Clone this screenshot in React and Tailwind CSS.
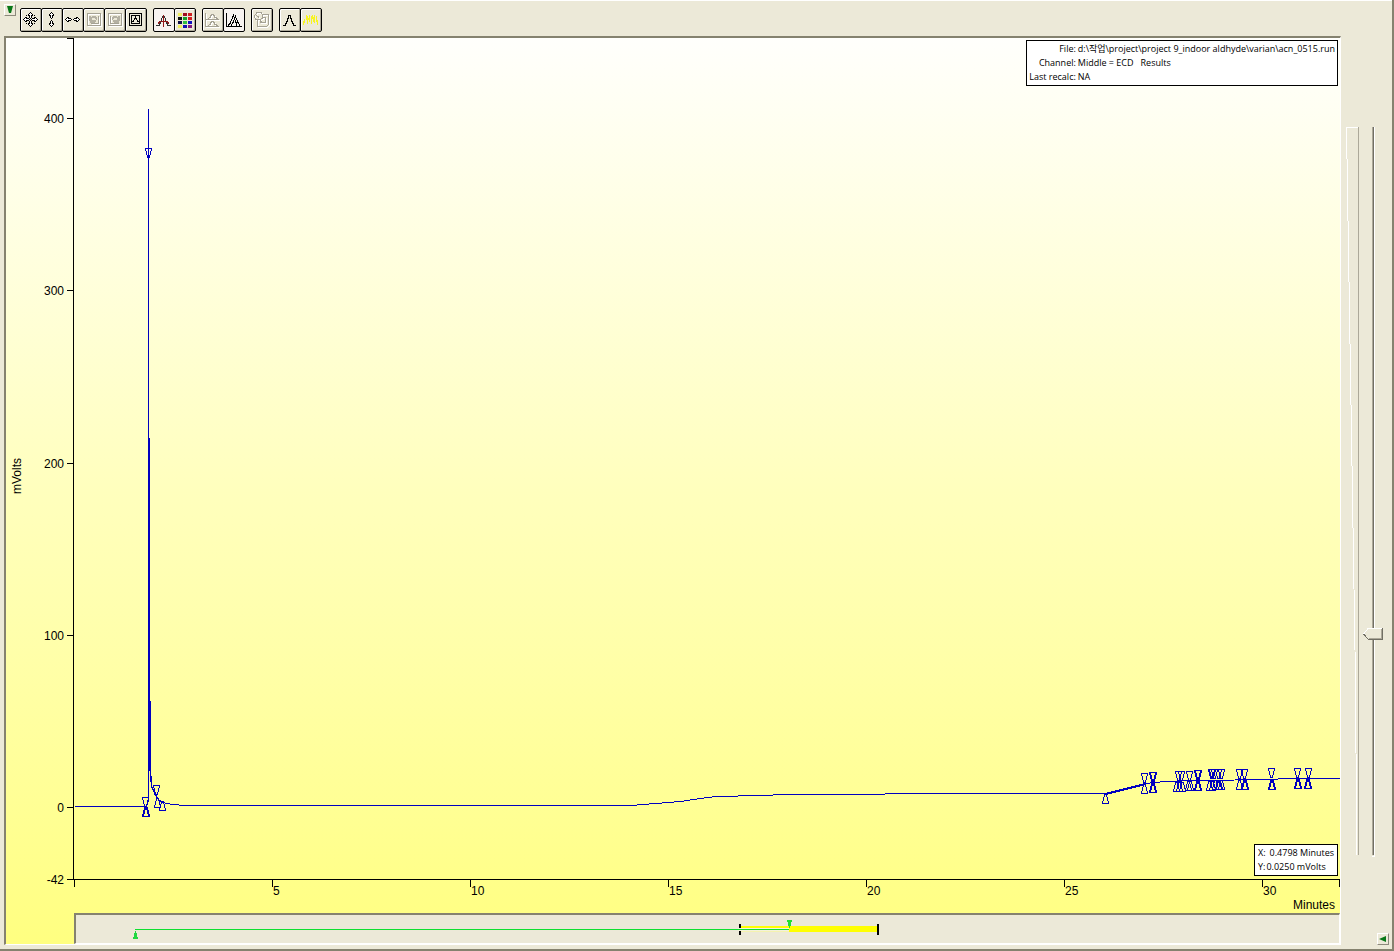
import { useState } from 'react';

const BLUE = '#0000c0';

const Y_TICKS = [
  { y: 118, label: '400' },
  { y: 290, label: '300' },
  { y: 463, label: '200' },
  { y: 635, label: '100' },
  { y: 807, label: '0' },
  { y: 879, label: '-42' },
];

const X_TICKS = [
  { x: 74, label: '' },
  { x: 272, label: '5' },
  { x: 470, label: '10' },
  { x: 668, label: '15' },
  { x: 866, label: '20' },
  { x: 1064, label: '25' },
  { x: 1262, label: '30' },
  { x: 1339, label: '' },
];

// [x, top] of every peak start / end marker
const DOWN_MARKS = [
  [148, 148], [145, 797], [156, 785],
  [1144, 773], [1152, 772], [1153, 772], [1178, 771], [1181, 771], [1189, 771],
  [1197, 770], [1198, 770], [1211, 769], [1212, 769], [1214, 769], [1218, 769], [1221, 769],
  [1239, 769], [1244, 769], [1271, 768], [1297, 768], [1308, 768],
];

const UP_MARKS = [
  [145, 807], [146, 807], [157, 798], [162, 801], [1105, 794],
  [1144, 784], [1152, 783], [1153, 783], [1176, 782], [1179, 782], [1182, 782], [1188, 781],
  [1190, 781], [1197, 781], [1198, 781], [1209, 781], [1212, 781], [1215, 780], [1218, 780],
  [1219, 780], [1221, 780], [1239, 780], [1244, 780], [1245, 780], [1271, 780], [1272, 780],
  [1297, 779], [1298, 779], [1307, 779], [1308, 779],
];

const TRACE =
  'M74 806H146L148 800V108M148 437V700L149 765L151 786L155 795L158 799L162 802L172 804L185 805H630L655 803L680 801L700 798L716 796L760 795L785 794H870L900 793H1105L1145 783L1165 781L1200 780L1270 779L1285 778H1340';

const ARROW_UP = ['..#..', '.#o#.', '#ooo#', '##o##', '.#o#.', '.#o#.', '..#..'];
const ARROW_DOWN = [...ARROW_UP].reverse();
const ARROW_LEFT = ['..##...', '.#o###.', '#ooooo#', '.#o###.', '..##...'];
const ARROW_RIGHT = ['...##..', '.###o#.', '#ooooo#', '.###o#.', '...##..'];

// One square per character: # is black, o is white
function Pixels({ rows, x, y }) {
  return rows.flatMap((row, r) =>
    [...row].map((c, i) =>
      c === '.' ? null : (
        <rect key={`${r}-${i}`} x={x + i} y={y + r} width="1" height="1" fill={c === '#' ? '#000' : '#fff'} />
      )
    )
  );
}

function ArrowsAll() {
  return (
    <>
      <Pixels rows={ARROW_UP} x={6} y={1} />
      <Pixels rows={ARROW_DOWN} x={6} y={9} />
      <Pixels rows={ARROW_LEFT} x={1} y={6} />
      <Pixels rows={ARROW_RIGHT} x={9} y={6} />
      <path d="M4 4H5V5H4ZM12 4H13V5H12ZM4 12H5V13H4ZM12 12H13V13H12Z" fill="#000" />
    </>
  );
}

function ArrowsVertical() {
  return (
    <>
      <Pixels rows={ARROW_UP} x={6} y={1} />
      <Pixels rows={ARROW_DOWN} x={6} y={9} />
    </>
  );
}

function ArrowsHorizontal() {
  return (
    <>
      <Pixels rows={ARROW_LEFT} x={1} y={6} />
      <Pixels rows={ARROW_RIGHT} x={9} y={6} />
    </>
  );
}

// Disabled icons get a white shadow down and to the right
function Embossed({ children }) {
  return (
    <>
      <g fill="none" stroke="#fff" transform="translate(1 1)">{children}</g>
      <g fill="none" stroke="#a5a294">{children}</g>
    </>
  );
}

function ZoomPrevious() {
  return (
    <>
      <Embossed>
        <path d="M2.500 2.500H15.500V14.500H2.500Z" />
        <path d="M13.500 5V12.500H5.500" />
      </Embossed>
      <path d="M4 5H6V6H7V5H11V6H12V9H11V11H10V12H5V10H4Z" fill="#b4b1a3" />
      <path d="M7 7H10V8H11V9H7Z" fill="#ece9d8" />
    </>
  );
}

function ZoomNext() {
  return (
    <>
      <Embossed>
        <path d="M2.500 2.500H15.500V14.500H2.500Z" />
        <path d="M4.500 5V12.500H12.500" />
      </Embossed>
      <path d="M14 5H12V6H11V5H7V6H6V9H7V11H8V12H13V10H14Z" fill="#b4b1a3" />
      <path d="M11 7H8V8H7V9H11Z" fill="#ece9d8" />
    </>
  );
}

function FullScale() {
  return (
    <g fill="none" stroke="#000">
      <path d="M2.500 2.500H14.500V14.500H2.500ZM4.500 4.500H12.500V12.500H4.500Z" />
      <path d="M5 10.500H6L7.500 8.500L8.500 6.500L9.500 8.500L11 10.500H12" />
    </g>
  );
}

function PeakCursor() {
  return (
    <g fill="none">
      <path d="M1 14.500H4L6 10.500L7.500 5.500H9.500L11 10.500L13 14.500H16" stroke="#303030" />
      <path d="M8.500 4V16M3 12.500L5 10.500H12L14 12.500" stroke="#901818" />
    </g>
  );
}

function ColorGrid() {
  const colors = [
    '#f0f060', '#a01020', '#d02020',
    '#101010', '#18a028', '#d02020',
    '#10104a', '#30c040', '#1010c0',
    '#f0f060', '#1010b0', '#801880',
  ];
  return colors.map((c, i) => (
    <rect key={i} x={2 + (i % 3) * 5} y={2 + Math.floor(i / 3) * 4} width="4" height="3" fill={c} />
  ));
}

function StackedPlots() {
  return (
    <Embossed>
      <path d="M1.500 2V8.500H15M4 7.500L6 6.500L7.500 3.500H9.500L11 6.500L14 7.500M1.500 9V15.500H15M4 14.500L6 13.500L7.500 10.500H9.500L11 13.500L14 14.500" />
    </Embossed>
  );
}

function OverlaidPlots() {
  return (
    <path
      d="M1.500 2V15.500H17M3 14.500L5 12.500L8.500 4.500L11 11.500L12 14.500M6 14.500L8 11.500L10.500 5.500L13 11.500L15 14.500"
      fill="none"
      stroke="#000"
    />
  );
}

function CopyPlot() {
  return (
    <Embossed>
      <path d="M1.500 4.500L4 1.500H8L9.500 3.500V7L7.500 8.500H3L1.500 6.500ZM9 3.500H15.500V13.500L13.500 15.500H4.500V9" />
      <path d="M7 11.500H12.500V6.500H10M3.500 4.500L6 6.500M7 9.500L10 12" />
    </Embossed>
  );
}

function SinglePeak() {
  return (
    <path
      d="M2 14.500H4.500V12.500H5.500V10.500H6.500V7.500H7.500V4.500H9.500V7.500H10.500V10.500H11.500V12.500H12.500V14.500H15"
      fill="none"
      stroke="#000"
    />
  );
}

function YellowTrace() {
  return (
    <path
      d="M1.500 14V10M2.500 12V8M4.500 9V4M5.500 13V5M6.500 9V7M7.500 11V4M9.500 13V5M10.500 8V4M11.500 11V6M12.500 12V4M14.500 11V5M15.500 14V9"
      fill="none"
      stroke="#f8f420"
    />
  );
}

const TOOL_GROUPS = [
  [
    { label: 'Zoom all directions', Icon: ArrowsAll },
    { label: 'Zoom vertical', Icon: ArrowsVertical },
    { label: 'Zoom horizontal', Icon: ArrowsHorizontal },
    { label: 'Previous scaling', Icon: ZoomPrevious, disabled: true },
    { label: 'Next scaling', Icon: ZoomNext, disabled: true },
    { label: 'Full scale', Icon: FullScale },
  ],
  [
    { label: 'Cursor', Icon: PeakCursor, pressed: true },
    { label: 'Colors', Icon: ColorGrid },
  ],
  [
    { label: 'Stacked plots', Icon: StackedPlots, disabled: true },
    { label: 'Overlaid plots', Icon: OverlaidPlots, pressed: true },
  ],
  [{ label: 'Copy plot', Icon: CopyPlot, disabled: true }],
  [
    { label: 'Select peak', Icon: SinglePeak },
    { label: 'Select trace', Icon: YellowTrace },
  ],
];

function ToolButton({ label, Icon, pressed, disabled }) {
  return (
    <button
      aria-label={label}
      disabled={disabled}
      className={`-mr-px flex h-6 w-[22px] items-center justify-center rounded-xs border border-black ${
        pressed
          ? 'bg-[#f7f3f0]'
          : 'bg-[#ece9d8] shadow-[inset_1px_1px_0_#fff,inset_-1px_-1px_0_#aca899]'
      }`}
    >
      <svg className="h-[18px] w-[18px] shrink-0" viewBox="0 0 18 18" shapeRendering="crispEdges">
        <Icon />
      </svg>
    </button>
  );
}

function MenuButton({ label, points }) {
  return (
    <button
      aria-label={label}
      className="flex h-3 w-3 items-center justify-center border border-t-white border-l-white border-r-[#8c897c] border-b-[#8c897c]"
    >
      <svg className="h-2.5 w-2.5 shrink-0" viewBox="0 0 10 10">
        <polygon points={points} fill="#087818" />
      </svg>
    </button>
  );
}

function Chromatogram() {
  return (
    <svg
      className="min-h-0 w-full flex-1 font-['Liberation_Sans',Arial,sans-serif] text-xs"
      viewBox="6 38 1334 875"
      role="img"
      aria-label="Chromatogram"
    >
      <g stroke="#000" fill="none" shapeRendering="crispEdges">
        <path d="M67 38.500H73.500V879.500M67 879.500H1340" />
        {Y_TICKS.map((t) => (
          <path key={t.y} d={`M67 ${t.y + 0.5}H73`} />
        ))}
        {X_TICKS.map((t) => (
          <path key={t.x} d={`M${t.x + 0.5} 880V887`} />
        ))}
      </g>

      <g fill="#000">
        {Y_TICKS.map((t) => (
          <text key={t.y} x="64" y={t.y + 5} textAnchor="end">{t.label}</text>
        ))}
        {X_TICKS.map((t) => (
          <text key={t.x} x={t.x + 1} y="895">{t.label}</text>
        ))}
        <text x="1335" y="909" textAnchor="end">Minutes</text>
        <text transform="translate(21 494) rotate(-90)">mVolts</text>
      </g>

      {/* Trace and peak markers */}
      <g transform="translate(0.5 0.5)" fill="none" stroke={BLUE} shapeRendering="crispEdges">
        <path d={TRACE} />
        <path d="M149 437V700L150 765L151 786L156 796" />
        <path d="M150 700V770L151 780M1105 794L1145 784" />
        {DOWN_MARKS.map(([x, y]) => (
          <path key={`${x}-${y}`} d={`M${x - 3} ${y}H${x + 3}L${x + 1} ${y + 9}H${x - 1}Z`} />
        ))}
        {UP_MARKS.map(([x, y]) => (
          <path key={`${x}-${y}`} d={`M${x - 1} ${y}H${x + 1}L${x + 3} ${y + 9}H${x - 3}Z`} />
        ))}
      </g>
    </svg>
  );
}

function Navigator() {
  return (
    <div className="ml-[68px] h-[31px] shrink-0 border-t-2 border-l-2 border-r border-b border-t-[#85826f] border-l-[#85826f] border-r-white border-b-white bg-[#ece9d8]">
      <svg className="h-full w-full" viewBox="76 915 1263 28" shapeRendering="crispEdges" aria-hidden="true">
        <rect x="740" y="926" width="50" height="2" fill="#ffff00" />
        <rect x="740" y="930" width="50" height="2" fill="#f4f2b0" />
        <rect x="789" y="926" width="89" height="6" fill="#ffff00" />
        <rect x="739" y="924" width="2" height="11" fill="#000" />
        <rect x="877" y="924" width="2" height="11" fill="#000" />
        <rect x="738" y="928" width="51" height="3" fill="#f4f2dc" />
        <rect x="135" y="929" width="654" height="1" fill="#10e030" />
        <polygon points="135,931 136,931 138,939 133,939" fill="#20d840" />
        <polygon points="787,920 792,920 790,928 789,928" fill="#20e030" />
      </svg>
    </div>
  );
}

function ScaleSlider() {
  const [value, setValue] = useState(30);
  // thumb travel in svg units
  const top = 628 + ((30 - value) / 100) * 728;

  return (
    <div className="relative mt-[91px] mb-[88px] min-h-0 flex-1">
      <svg className="h-full w-full" viewBox="1341 127 51 730" shapeRendering="crispEdges" aria-hidden="true">
        <path d="M1358.500 127.500H1346.500L1355 650L1357 855" fill="none" stroke="#fff" />
        <path d="M1358.500 127V855" stroke="#aca899" />
        <path d="M1372.500 127V855" stroke="#aca899" />
        <path d="M1373.500 127V855" stroke="#716f64" />
        <path d="M1374.500 127V856H1372" fill="none" stroke="#fff" />
        <g transform={`translate(0 ${top})`}>
          <path d="M1363 6L1368 0H1383V12H1368Z" fill="#ece9d8" />
          <path d="M1363.500 6L1368 0.500H1382" fill="none" stroke="#fff" />
          <path d="M1363.500 6L1368.500 11.500H1382.500V0" fill="none" stroke="#716f64" />
          <path d="M1369 10.500H1381.500V1" fill="none" stroke="#aca899" />
        </g>
      </svg>
      <input
        type="range"
        aria-label="Vertical scale"
        value={value}
        onChange={(e) => setValue(Number(e.target.value))}
        className="absolute inset-y-0 right-2 w-5 opacity-0 [direction:rtl] [writing-mode:vertical-lr]"
      />
    </div>
  );
}

export default function App() {
  return (
    <div className="flex h-screen flex-col border-r-2 border-b-2 border-[#85826f] bg-[#ece9d8] font-['Open_Sans','Noto_Sans_CJK_KR',Arial,sans-serif] text-black">
      {/* Toolbar */}
      <div className="flex h-9 shrink-0 items-start border-t border-white pl-1">
        <div className="pt-[3px]">
          <MenuButton label="Chart menu" points="2,1 8,1 6,8 4,8" />
        </div>
        <div className="flex gap-[6px] pt-[7px] pl-1">
          {TOOL_GROUPS.map((group, i) => (
            <div key={i} className="flex pr-px">
              {group.map((tool) => (
                <ToolButton key={tool.label} {...tool} />
              ))}
            </div>
          ))}
        </div>
      </div>

      <div className="flex min-h-0 flex-1 pb-1 pl-1">
        <main className="relative flex min-w-0 flex-1 flex-col border-t-2 border-l-2 border-r border-b border-t-[#85826f] border-l-[#85826f] border-r-white border-b-white bg-linear-to-b from-[#fffffc] via-[#ffffbd] to-[#ffff80]">
          <Chromatogram />
          <Navigator />

          {/* File info */}
          <dl className="absolute top-[2px] right-[2px] grid grid-cols-[auto_auto] gap-x-[2px] border border-black bg-white px-[2px] py-px text-[9px] leading-[14px] whitespace-pre">
            <dt className="text-right">File:</dt>
            <dd>d:\작업\project\project 9_indoor aldhyde\varian\acn_0515.run</dd>
            <dt className="text-right">Channel:</dt>
            <dd>Middle = ECD   Results</dd>
            <dt className="text-right">Last recalc:</dt>
            <dd>NA</dd>
          </dl>

          {/* Cursor position */}
          <dl className="absolute right-[2px] bottom-[68px] border border-black bg-white px-[3px] py-px text-[9px] leading-[14px] whitespace-pre">
            <div className="flex gap-1">
              <dt>X:</dt>
              <dd>0.4798 Minutes</dd>
            </div>
            <div className="flex gap-px">
              <dt>Y:</dt>
              <dd>0.0250 mVolts</dd>
            </div>
          </dl>
        </main>

        <aside className="flex w-[51px] shrink-0 flex-col">
          <ScaleSlider />
          <div className="-mt-3 flex justify-end pr-[3px]">
            <MenuButton label="Scale menu" points="1,5 8,2 8,8" />
          </div>
        </aside>
      </div>
    </div>
  );
}
